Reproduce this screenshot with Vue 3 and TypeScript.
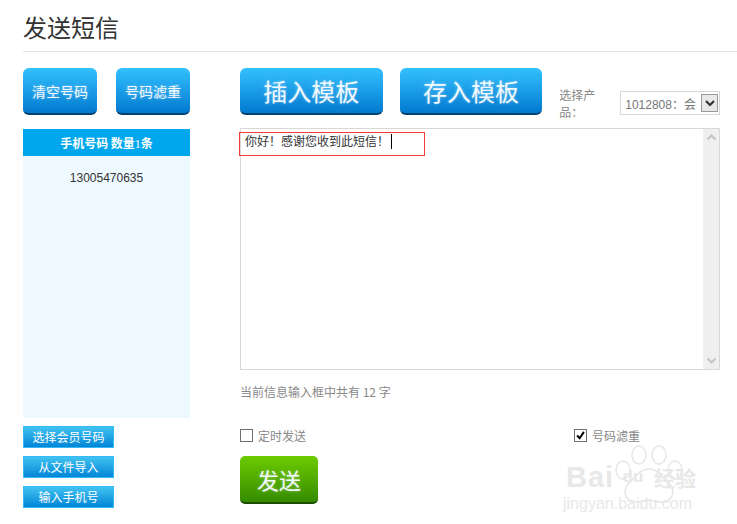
<script setup lang="ts">
const smallButtons: string[] = ['选择会员号码', '从文件导入', '输入手机号']
</script>

<template>
  <div class="page">
    <h1 class="title">发送短信</h1>
    <div class="body">
      <aside class="left">
        <div class="left-top">
          <button class="btn mid">清空号码</button>
          <button class="btn mid">号码滤重</button>
        </div>
        <div class="panel">
          <div class="panel-head">手机号码 数量<span class="num">1</span>条</div>
          <div class="panel-item">13005470635</div>
        </div>
        <div class="small-list">
          <button v-for="s in smallButtons" :key="s" class="small">{{ s }}</button>
        </div>
      </aside>
      <main class="right">
        <div class="toolbar">
          <button class="btn large">插入模板</button>
          <button class="btn large">存入模板</button>
          <div class="product">
            <span class="product-label">选择产品：</span>
            <div class="select">
              <span class="select-text">1012808：会</span>
              <span class="select-arrow">
                <svg width="14" height="14" viewBox="0 0 14 14"><path d="M3 5l4 4 4-4" fill="none" stroke="#333" stroke-width="2.2" /></svg>
              </span>
            </div>
          </div>
        </div>
        <div class="editor">
          <div class="editor-text">你好！感谢您收到此短信！<i class="caret"></i></div>
          <div class="scroll">
            <svg width="11" height="7" viewBox="0 0 11 7"><path d="M1.5 5.5l4-4 4 4" fill="none" stroke="#c4c4c4" stroke-width="2" /></svg>
            <svg width="11" height="7" viewBox="0 0 11 7"><path d="M1.5 1.5l4 4 4-4" fill="none" stroke="#c4c4c4" stroke-width="2" /></svg>
          </div>
          <div class="highlight"></div>
        </div>
        <p class="count">当前信息输入框中共有 12 字</p>
        <div class="options">
          <label class="opt"><span class="box"></span>定时发送</label>
          <label class="opt opt-right">
            <span class="box">
              <svg width="13" height="13" viewBox="0 0 13 13"><path d="M2.5 6.5l3 3.2 5-7.5" fill="none" stroke="#000" stroke-width="2.4" /></svg>
            </span>号码滤重
          </label>
        </div>
        <button class="btn send">发送</button>
      </main>
    </div>
    <div class="mark">
      <svg class="paw" width="84" height="62" viewBox="0 0 84 62">
        <g fill="none" stroke="#e6e6e6" stroke-width="1.5">
          <ellipse cx="16" cy="25" rx="7" ry="9" />
          <ellipse cx="32" cy="10" rx="7" ry="9" />
          <ellipse cx="52" cy="10" rx="7" ry="9" />
          <ellipse cx="68" cy="25" rx="7" ry="9" />
          <path d="M42 24c-10 0-13 8-20 14-7 7-4 20 8 19 5 0 8-2 12-2s7 2 12 2c12 1 15-12 8-19-7-6-10-14-20-14z" />
        </g>
      </svg>
      <div class="mark-line">
        <span class="mark-bai">Bai</span><span class="mark-du">du</span><span class="mark-cn">经验</span>
      </div>
      <div class="mark-url">jingyan.baidu.com</div>
    </div>
  </div>
</template>

<style>
html, body { margin: 0; background: #fff; }
</style>

<style scoped>
.page {
  position: relative;
  width: 737px;
  height: 524px;
  padding-left: 23px;
  box-sizing: border-box;
  overflow: hidden;
  font-family: "Noto Sans CJK SC", "Liberation Sans", sans-serif;
  color: #666;
  background: #fff;
}
.title {
  margin: 0 0 16px;
  height: 51px;
  box-sizing: content-box;
  border-bottom: 1px solid #e5e5e5;
  font-size: 24px;
  font-weight: 400;
  line-height: 54px;
  color: #333;
}
.body { display: flex; gap: 50px; }
.left { width: 167px; }
.left-top { display: flex; justify-content: space-between; margin-top: 0; }
.btn {
  display: block;
  padding: 0;
  border: 0;
  border-bottom: 2px solid #01416f;
  box-sizing: border-box;
  color: #f2f9ff;
  font-family: inherit;
  text-shadow: 0 0 3px rgba(255, 255, 255, 0.45);
  background: linear-gradient(#33c1ff, #0279cf);
}
.mid { width: 74px; height: 47px; border-radius: 6px; font-size: 14px; }
.large { width: 143px; height: 47px; border-radius: 6px; font-size: 24px; }
.panel { margin-top: 14px; height: 289px; background: #edf8ff; }
.panel-head {
  height: 27px;
  background: #00a7ec;
  color: #fff;
  font-size: 12px;
  font-weight: 700;
  line-height: 28px;
  text-align: center;
}
.num { font-family: "Liberation Serif", serif; font-weight: 400; }
.panel-item {
  margin-top: 13px;
  font-family: "Liberation Sans", sans-serif;
  font-size: 12px;
  line-height: 18px;
  color: #333;
  text-align: center;
}
.small-list { display: flex; flex-direction: column; gap: 8px; margin-top: 8px; }
.small {
  width: 91px;
  height: 22px;
  padding: 0;
  border: 1px solid #36baf6;
  box-sizing: border-box;
  color: #fff;
  font-family: inherit;
  font-size: 12px;
  line-height: 20px;
  background: linear-gradient(#42c2f0, #0186d8);
}
.right { width: 480px; }
.toolbar { display: flex; gap: 17px; height: 60px; }
.product { display: flex; align-items: center; height: 24px; margin: 23px 0 0 0; }
.product-label { font-size: 12px; color: #888; margin-right: 1px; }
.select {
  display: flex;
  align-items: center;
  justify-content: space-between;
  width: 100px;
  height: 24px;
  padding: 0 1px 0 4px;
  border: 1px solid #d8d8d8;
  box-sizing: border-box;
  font-size: 12px;
  color: #777;
}
.select-text { font-family: "Liberation Sans", "Noto Sans CJK SC", sans-serif; white-space: nowrap; }
.select-arrow {
  display: flex;
  align-items: center;
  justify-content: center;
  width: 17px;
  height: 18px;
  border: 1px solid #999;
  box-sizing: border-box;
  background: #e8e8e8;
}
.editor {
  position: relative;
  display: flex;
  height: 242px;
  border: 1px solid #d8d8d8;
  box-sizing: border-box;
}
.editor-text {
  flex: 1;
  padding: 3px 4px;
  font-size: 12px;
  line-height: 18px;
  color: #333;
}
.caret {
  display: inline-block;
  width: 1px;
  height: 15px;
  margin-left: 2px;
  vertical-align: -3px;
  background: #000;
}
.scroll {
  display: flex;
  flex-direction: column;
  justify-content: space-between;
  align-items: center;
  width: 16px;
  padding: 5px 0;
  box-sizing: border-box;
  background: #efefef;
}
.highlight {
  position: absolute;
  left: -2px;
  top: 3px;
  width: 186px;
  height: 24px;
  border: 1px solid #f23a3a;
  box-sizing: border-box;
}
.count { margin: 13px 0 0; font-size: 12px; line-height: 18px; color: #888; }
.options { display: flex; margin-top: 26px; height: 16px; }
.opt { display: flex; align-items: center; font-size: 12px; color: #888; }
.opt-right { margin-left: 267px; padding-left: 1px; }
.box {
  display: flex;
  align-items: center;
  justify-content: center;
  width: 13px;
  height: 13px;
  margin-right: 5px;
  border: 1px solid #707070;
  box-sizing: border-box;
}
.send {
  width: 78px;
  height: 48px;
  margin-top: 13px;
  border-radius: 5px;
  border-bottom-color: #1c4c00;
  font-size: 22px;
  background: linear-gradient(#6ccb00, #358b00);
}
.mark {
  position: absolute;
  left: 563px;
  top: 442px;
  width: 140px;
  color: #e8e8e8;
  text-align: center;
}
.paw { position: absolute; left: 44px; top: 3px; }
.mark-line {
  position: relative;
  display: flex;
  align-items: center;
  height: 30px;
  margin-top: 20px;
  white-space: nowrap;
}
.mark-bai { font: 700 29px "Liberation Sans", sans-serif; width: 46px; text-align: left; margin-left: 3px; letter-spacing: 1px; }
.mark-du { font: 700 17px "Liberation Sans", sans-serif; width: 42px; text-align: center; }
.mark-cn { font-size: 21px; font-weight: 700; line-height: 24px; }
.mark-url { margin-top: 3px; font: 400 16px "Liberation Sans", sans-serif; white-space: nowrap; text-align: left; }
</style>
